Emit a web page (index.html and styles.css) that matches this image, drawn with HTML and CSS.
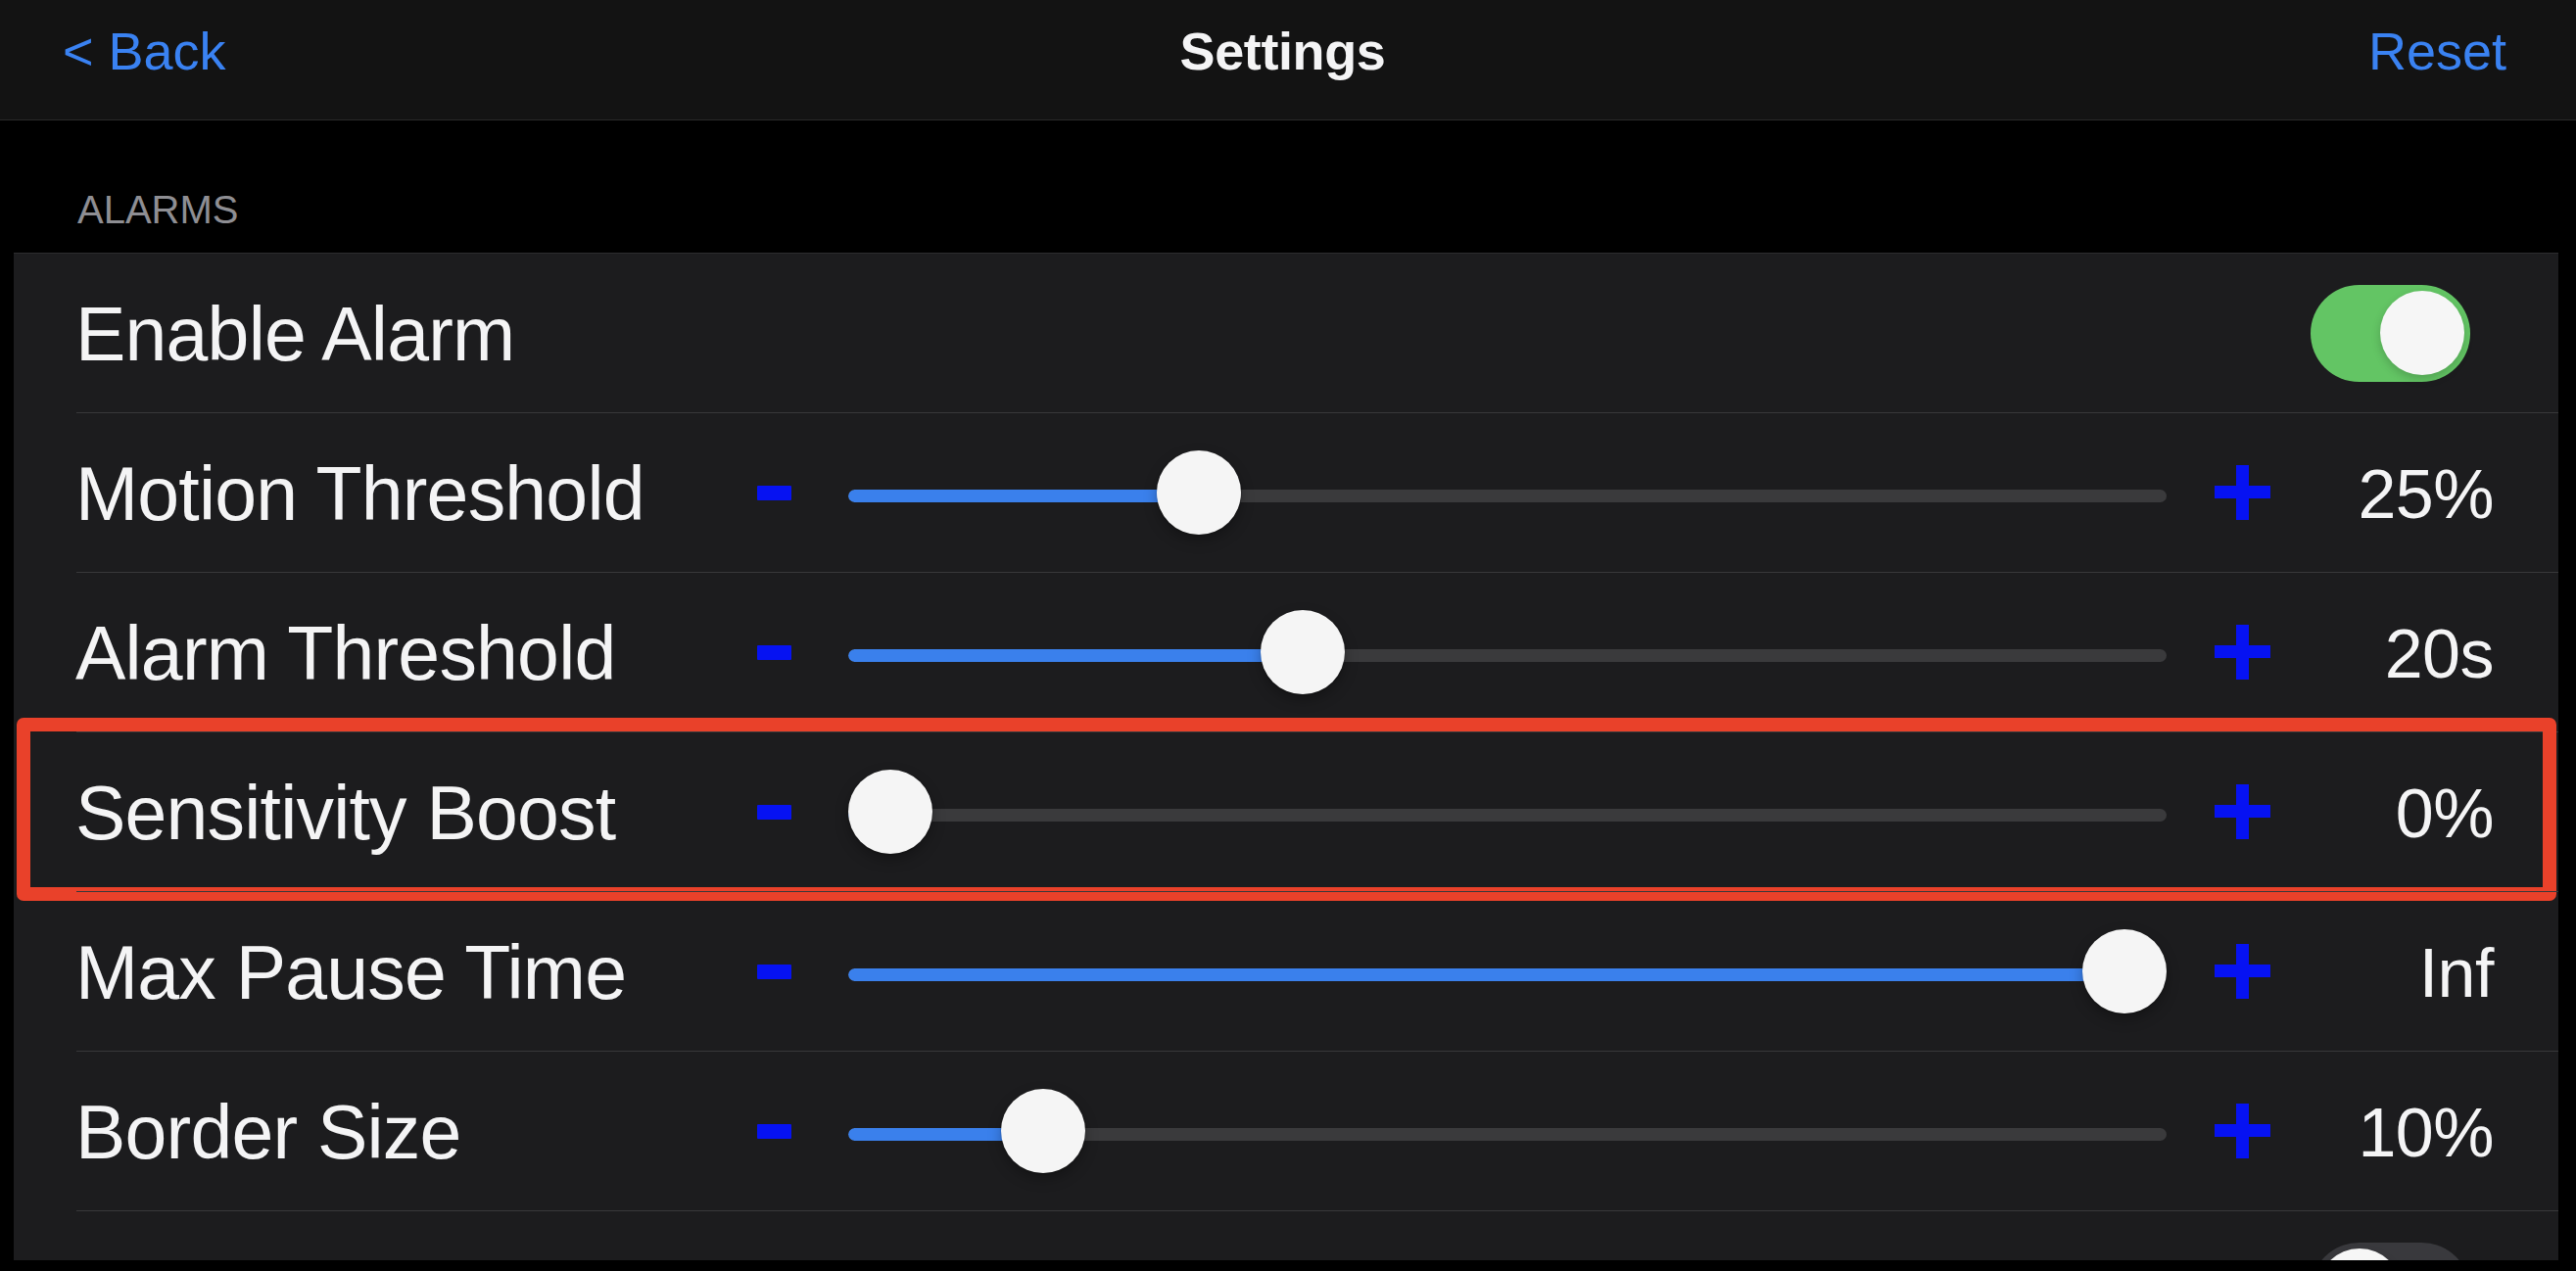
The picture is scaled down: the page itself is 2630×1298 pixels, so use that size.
FILE: index.html
```html
<!DOCTYPE html>
<html lang="en">
<head>
<meta charset="utf-8">
<title>Settings</title>
<link rel="stylesheet" href="styles.css">
</head>
<body>
<div class="screen">
  <header class="navbar">
    <span class="nav-btn nav-back">&lt; Back</span>
    <span class="nav-title">Settings</span>
    <span class="nav-btn nav-reset">Reset</span>
  </header>
  <main class="scroll">
    <div class="section-title">ALARMS</div>
    <div class="card">
      <div class="row first">
        <span class="label">Enable Alarm</span>
        <span class="toggle on"><span class="knob"></span></span>
      </div>
      <div class="row">
        <span class="label">Motion Threshold</span>
        <span class="minus"></span>
        <span class="slider" style="--v:0.25"><span class="track"><span class="fill"></span></span><span class="thumb"></span></span>
        <span class="plus"></span>
        <span class="value">25%</span>
      </div>
      <div class="row">
        <span class="label">Alarm Threshold</span>
        <span class="minus"></span>
        <span class="slider" style="--v:0.334"><span class="track"><span class="fill"></span></span><span class="thumb"></span></span>
        <span class="plus"></span>
        <span class="value">20s</span>
      </div>
      <div class="row highlighted">
        <span class="label">Sensitivity Boost</span>
        <span class="minus"></span>
        <span class="slider" style="--v:0"><span class="track"><span class="fill"></span></span><span class="thumb"></span></span>
        <span class="plus"></span>
        <span class="value">0%</span>
        <span class="highlight-box"></span>
      </div>
      <div class="row">
        <span class="label">Max Pause Time</span>
        <span class="minus"></span>
        <span class="slider" style="--v:1"><span class="track"><span class="fill"></span></span><span class="thumb"></span></span>
        <span class="plus"></span>
        <span class="value">Inf</span>
      </div>
      <div class="row">
        <span class="label">Border Size</span>
        <span class="minus"></span>
        <span class="slider" style="--v:0.124"><span class="track"><span class="fill"></span></span><span class="thumb"></span></span>
        <span class="plus"></span>
        <span class="value">10%</span>
      </div>
      <div class="row">
        <span class="label"></span>
        <span class="toggle off"><span class="knob"></span></span>
      </div>
    </div>
  </main>
</div>
</body>
</html>
```

FILE: styles.css
```css
* { box-sizing: border-box; }

html, body {
  margin: 0;
  padding: 0;
  background: #000;
}

body {
  font-family: "Liberation Sans", Arial, sans-serif;
  color: #f4f4f5;
  width: 2630px;
  height: 1298px;
  overflow: hidden;
}

.screen {
  width: 2630px;
  height: 1298px;
  display: flex;
  flex-direction: column;
  background: #000;
}

/* Navigation bar */
.navbar {
  height: 123px;
  flex: 0 0 123px;
  background: #131313;
  border-bottom: 1px solid #2a2a2a;
  display: grid;
  grid-template-columns: 1fr auto 1fr;
  align-items: start;
  padding: 25px 71px 0 64px;
}

.nav-btn {
  font-size: 54px;
  line-height: 54px;
  color: #3a82f2;
}

.nav-reset {
  justify-self: end;
}

.nav-back {
  justify-self: start;
}

.nav-title {
  font-size: 54px;
  line-height: 54px;
  font-weight: 700;
  color: #f4f4f5;
  letter-spacing: -0.4px;
  margin-left: -4px;
}

/* Scroll area */
.scroll {
  height: 1164px;
  flex: 0 0 1164px;
  overflow: hidden;
  padding: 71px 18px 0 14px;
}

.section-title {
  font-size: 40px;
  line-height: 40px;
  color: #8e8e93;
  padding-left: 65px;
  margin-bottom: 24px;
}

.card {
  background: #1c1c1e;
  border-top: 1px solid #2c2c2e;
}

.row {
  position: relative;
  height: 163px;
  padding: 1px 66px 0 63px;
  display: flex;
  align-items: center;
}

.row.first {
  height: 162px;
  padding-top: 0;
}

.row:not(.first)::before {
  content: "";
  position: absolute;
  top: 0;
  left: 64px;
  right: 0;
  height: 1px;
  background: #38383a;
}

.label {
  flex: 0 0 696px;
  font-size: 77px;
  line-height: 77px;
  letter-spacing: -0.8px;
  white-space: nowrap;
  color: #f4f4f5;
  padding-top: 3px;
}

.minus {
  flex: 0 0 35px;
  height: 15px;
  background: #0612f2;
  border-radius: 1px;
}

.slider {
  flex: 0 0 1346px;
  height: 86px;
  margin-left: 58px;
  position: relative;
  display: flex;
  align-items: center;
}

.track {
  width: 100%;
  height: 13px;
  margin-top: 6px;
  border-radius: 7px;
  background: #3a3a3c;
  overflow: hidden;
  display: flex;
}

.fill {
  height: 100%;
  width: calc(var(--v) * (100% - 86px) + 43px);
  background: #3a80ec;
  border-radius: 7px 0 0 7px;
}

.thumb {
  position: absolute;
  top: 0;
  left: calc(var(--v) * (100% - 86px));
  width: 86px;
  height: 86px;
  border-radius: 50%;
  background: #f5f5f5;
  box-shadow: 0 6px 14px rgba(0, 0, 0, 0.28), 0 1px 2px rgba(0, 0, 0, 0.2);
}

.plus {
  flex: 0 0 57px;
  height: 56px;
  margin-left: 49px;
  position: relative;
}

.plus::before,
.plus::after {
  content: "";
  position: absolute;
  background: #0612f2;
}

.plus::before {
  left: 0;
  right: 0;
  top: 21px;
  height: 13px;
}

.plus::after {
  top: 0;
  bottom: 0;
  left: 22px;
  width: 13px;
}

.value {
  flex: 1 1 auto;
  text-align: right;
  font-size: 70px;
  line-height: 70px;
  letter-spacing: -0.5px;
  color: #f4f4f5;
  padding-top: 3px;
}

/* Toggles */
.toggle {
  margin-left: auto;
  margin-right: 24px;
  width: 163px;
  height: 99px;
  border-radius: 50px;
  display: flex;
  align-items: center;
  padding: 0 6px 0 7px;
}

.toggle.on {
  background: #63c564;
  justify-content: flex-end;
}

.toggle.off {
  background: #39393d;
  justify-content: flex-start;
}

.knob {
  width: 86px;
  height: 86px;
  border-radius: 50%;
  background: #f6f6f6;
  box-shadow: 0 4px 10px rgba(0, 0, 0, 0.18);
}

/* Annotation highlight */
.highlight-box {
  position: absolute;
  top: -14px;
  bottom: -10px;
  left: 3px;
  right: 2px;
  border: 14px solid #e9412a;
  border-radius: 7px;
  pointer-events: none;
}
```
